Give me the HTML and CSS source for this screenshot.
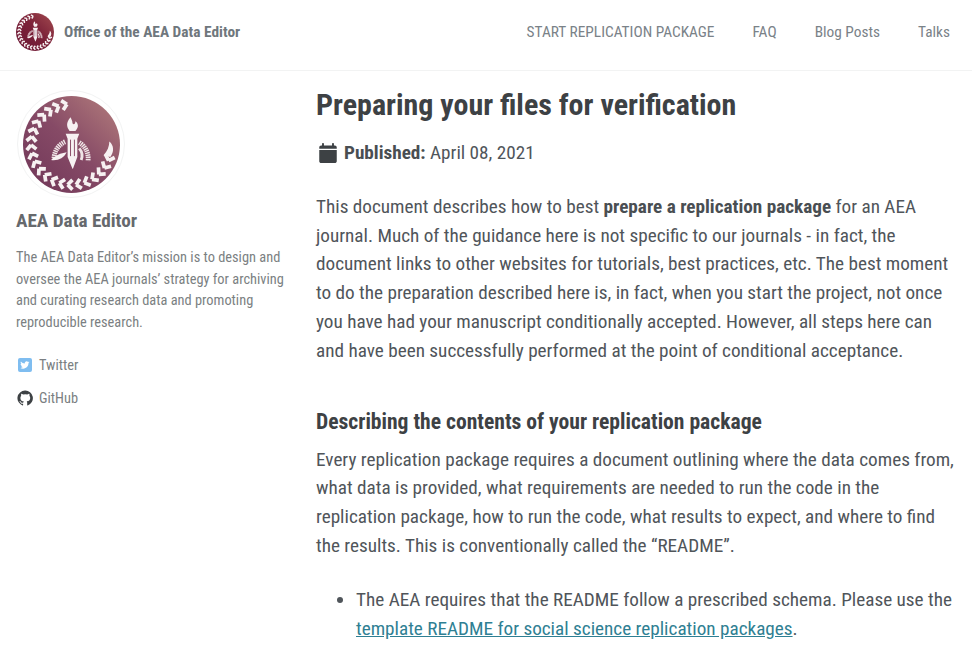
FILE: index.html
```html
<!DOCTYPE html>
<html lang="en">
<head>
    <meta charset="UTF-8">
    <meta name="viewport" content="width=device-width, initial-scale=1.0">
    <title>Preparing your files for verification - Office of the AEA Data Editor</title>
    <link rel="stylesheet" href="styles.css">
</head>
<body>

<!-- seal art, used twice -->
<svg class="sprite" width="0" height="0">
    <defs>
        <linearGradient id="seal-soft" x1="0" y1="1" x2="1" y2="0">
            <stop offset="0" stop-color="#6f3557"/>
            <stop offset="0.5" stop-color="#864a66"/>
            <stop offset="1" stop-color="#b57f7d"/>
        </linearGradient>
        <linearGradient id="seal-dark" x1="0" y1="1" x2="1" y2="0">
            <stop offset="0" stop-color="#6a1634"/>
            <stop offset="0.55" stop-color="#7c2239"/>
            <stop offset="1" stop-color="#a44c50"/>
        </linearGradient>
        <path id="ear" d="M54 8.500 L49 3.500 M54 8.500 L49 13.500"/>
        <g id="seal-art" fill="#f7f1f2">
            <g fill="none" stroke="#f7f1f2" stroke-width="3.800">
                <use href="#ear" transform="rotate(-12 50 50)"/>
                <use href="#ear" transform="rotate(-24 50 50)"/>
                <use href="#ear" transform="rotate(-36 50 50)"/>
                <use href="#ear" transform="rotate(-48 50 50)"/>
                <use href="#ear" transform="rotate(-60 50 50)"/>
                <use href="#ear" transform="rotate(-72 50 50)"/>
                <use href="#ear" transform="rotate(-84 50 50)"/>
                <use href="#ear" transform="rotate(-96 50 50)"/>
                <use href="#ear" transform="rotate(-108 50 50)"/>
                <use href="#ear" transform="rotate(-120 50 50)"/>
                <use href="#ear" transform="rotate(-132 50 50)"/>
                <use href="#ear" transform="rotate(-144 50 50)"/>
                <use href="#ear" transform="rotate(-156 50 50)"/>
                <use href="#ear" transform="rotate(-168 50 50)"/>
                <use href="#ear" transform="rotate(180 50 50)"/>
                <use href="#ear" transform="rotate(168 50 50)"/>
                <use href="#ear" transform="rotate(156 50 50)"/>
                <use href="#ear" transform="rotate(144 50 50)"/>
                <use href="#ear" transform="rotate(132 50 50)"/>
                <use href="#ear" transform="rotate(120 50 50)"/>
                <use href="#ear" transform="rotate(108 50 50)"/>
            </g>
            <path d="M89 47 C94 51 94 58 90 63 L83 61 C87 57 89 52 89 47 Z"/>
            <path d="M49 22 C44 28 45 32 48 36 L54 36 C58 32 57 28 54 26 C54 29 52 30 51 28 C51 26 50 24 49 22 Z"/>
            <path d="M44 39 H58 L56 44 V63 L51.500 75 L51 75 L46 63 V44 Z"/>
            <path d="M49 45 V62 M53 45 V62" stroke="#8a4a66" stroke-width="1"/>
            <g fill="none" stroke="#efe4e6">
                <path d="M32 64 A19 19 0 0 1 44 47" stroke-width="5" stroke-dasharray="1.500 .7"/>
                <path d="M58 48 A19 19 0 0 1 67 67" stroke-width="5" stroke-dasharray="1.500 .7"/>
                <path d="M58 54 A12 12 0 0 1 60 66" stroke-width="3"/>
            </g>
            <path d="M29 66 C33 61 39 59 45 58 C42 64 36 67 29 66 Z"/>
        </g>
    </defs>
</svg>

<!-- top bar -->
<header class="masthead">
    <a class="site-title" href="#">
        <svg class="site-logo" viewBox="0 0 100 100">
            <circle cx="50" cy="50" r="50" fill="url(#seal-dark)"/>
            <use href="#seal-art"/>
        </svg>
        Office of the AEA Data Editor
    </a>
    <nav class="site-nav">
        <a href="#">START REPLICATION PACKAGE</a>
        <a href="#">FAQ</a>
        <a href="#">Blog Posts</a>
        <a href="#">Talks</a>
    </nav>
</header>

<div class="page">
    <!-- author column -->
    <aside class="sidebar">
        <div class="avatar">
            <svg viewBox="0 0 100 100" width="97" height="97">
                <circle cx="50" cy="50" r="50" fill="url(#seal-soft)"/>
                <use href="#seal-art"/>
            </svg>
        </div>
        <h3 class="author-name">AEA Data Editor</h3>
        <p class="author-bio">The AEA Data Editor’s mission is to design and oversee the AEA journals’ strategy for archiving and curating research data and promoting reproducible research.</p>
        <ul class="author-links">
            <li>
                <svg class="link-icon" viewBox="0 0 16 16">
                    <rect x="1" y="1" width="14" height="14" rx="2" fill="#7fbdf0"/>
                    <path d="M12.600 5.100c-.4.2-.7.3-1.100.3.4-.2.7-.6.8-1-.4.2-.8.4-1.200.5a1.900 1.900 0 0 0-3.300 1.700C6.200 6.500 4.800 5.800 3.900 4.600c-.5.900-.2 2 .6 2.500-.3 0-.6-.1-.9-.2 0 .9.7 1.700 1.500 1.900-.3.100-.6.100-.9 0 .2.800 1 1.300 1.800 1.300-.8.600-1.800.9-2.800.8.9.5 1.800.8 2.900.8 3.500 0 5.500-3 5.400-5.600.4-.3.800-.6 1.100-1z" fill="#fff"/>
                </svg>
                <a href="#">Twitter</a>
            </li>
            <li>
                <svg class="link-icon" viewBox="0 0 16 16">
                    <path d="M8 .6a7.600 7.600 0 0 0-2.400 14.800c.4.100.5-.2.500-.4v-1.300c-2.100.5-2.600-1-2.600-1-.3-.9-.8-1.100-.8-1.100-.7-.5.100-.5.100-.5.800.1 1.200.8 1.200.8.700 1.200 1.800.8 2.300.6.100-.5.300-.8.500-1-1.700-.2-3.400-.8-3.400-3.700 0-.8.300-1.500.8-2-.1-.2-.3-1 .1-2 0 0 .6-.2 2.100.8a7.200 7.200 0 0 1 3.800 0c1.500-1 2.100-.8 2.100-.8.400 1 .2 1.800.1 2 .5.500.8 1.200.8 2 0 2.900-1.800 3.500-3.500 3.700.3.200.5.700.5 1.400V15c0 .2.100.5.500.4A7.600 7.600 0 0 0 8 .6z" fill="#3d4144"/>
                </svg>
                <a href="#">GitHub</a>
            </li>
        </ul>
    </aside>

    <!-- post -->
    <main class="post">
        <h1 class="post-title">Preparing your files for verification</h1>
        <p class="post-meta">
            <svg class="meta-icon" viewBox="0 0 448 512">
                <path d="M96 0c13 0 24 11 24 24v40h208V24c0-13 11-24 24-24s24 11 24 24v40h24c26 0 48 22 48 48v32H0v-32c0-26 22-48 48-48h24V24C72 11 83 0 96 0zM0 176h448v288c0 26-22 48-48 48H48c-26 0-48-22-48-48z" fill="#3d4144"/>
            </svg>
            <span><strong>Published:</strong> April 08, 2021</span>
        </p>
        <p>This document describes how to best <strong>prepare a replication package</strong> for an AEA journal. Much of the guidance here is not specific to our journals - in fact, the document links to other websites for tutorials, best practices, etc. The best moment to do the preparation described here is, in fact, when you start the project, not once you have had your manuscript conditionally accepted. However, all steps here can and have been successfully performed at the point of conditional acceptance.</p>
        <h2>Describing the contents of your replication package</h2>
        <p>Every replication package requires a document outlining where the data comes from, what data is provided, what requirements are needed to run the code in the replication package, how to run the code, what results to expect, and where to find the results. This is conventionally called the “README”.</p>
        <ul class="post-list">
            <li>The AEA requires that the README follow a prescribed schema. Please use the <a href="#">template README for social science replication packages</a>.</li>
        </ul>
    </main>
</div>

</body>
</html>
```

FILE: styles.css
```css
html, body {
    height: 100%;
}
body {
    font-family: 'Roboto', sans-serif;
    font-stretch: 75%;
    color: #3d4144;
    background-color: #fff;
    margin: 0;
    padding: 0;
    overflow: hidden;
}
a {
    color: inherit;
    text-decoration: none;
}
.sprite {
    display: block;
}

/* top bar */
.masthead {
    display: flex;
    justify-content: space-between;
    align-items: center;
    height: 71px;
    padding: 0 22px 7px 16px;
    border-bottom: 1px solid #f2f3f3;
    box-sizing: border-box;
}
.site-title {
    display: flex;
    align-items: center;
    gap: 10px;
    font-size: 15.360px;
    font-weight: 700;
    color: #6f777d;
}
.site-logo {
    width: 38px;
    height: 38px;
}
.site-nav {
    display: flex;
    gap: 38px;
    font-size: 15.360px;
    color: #7a8288;
}

.page {
    display: flex;
}

/* author column */
.sidebar {
    width: 268px;
    margin-left: 16px;
    flex-shrink: 0;
    padding-top: 19px;
    font-size: 14.400px;
    color: #7b7f82;
}
.avatar {
    width: 108px;
    height: 108px;
    margin-left: 1px;
    border: 1px solid #f2f3f3;
    border-radius: 50%;
    display: flex;
    align-items: center;
    justify-content: center;
    box-sizing: border-box;
}
.author-name {
    font-size: 19.200px;
    font-weight: 700;
    color: #66696d;
    margin: 11px 0 0;
    line-height: 24px;
}
.author-bio {
    margin: 14px 0 0;
    line-height: 21.700px;
}
.author-links {
    list-style: none;
    margin: 15px 0 0;
    padding: 0;
}
.author-links li {
    display: flex;
    align-items: center;
    gap: 6px;
    height: 33px;
}
.link-icon {
    width: 16px;
    height: 16px;
    margin-left: 1px;
}

/* post */
.post {
    margin-left: 32px;
    width: 640px;
    font-size: 19.200px;
    line-height: 28.800px;
    color: #50555a;
}
.post-title {
    font-size: 30px;
    font-weight: 700;
    color: #3d4144;
    line-height: 38px;
    margin: 15px 0 0;
}
.post .post-meta {
    display: flex;
    align-items: center;
    gap: 7px;
    margin: 15px 0 0;
}
.meta-icon {
    width: 18px;
    height: 20px;
    margin-left: 3px;
}
.post p {
    margin-top: 0;
    margin-bottom: 0;
}
.post .post-meta + p {
    margin-top: 25px;
}
.post strong {
    font-weight: 700;
    color: #494e52;
}
.post h2 {
    font-size: 21.600px;
    font-weight: 700;
    color: #3d4144;
    line-height: 30px;
    margin: 41px 0 9px;
}
.post-list {
    margin: 25px 0 0;
    padding-left: 40px;
}
.post-list a {
    color: #2f7f93;
    text-decoration: underline;
}
```
